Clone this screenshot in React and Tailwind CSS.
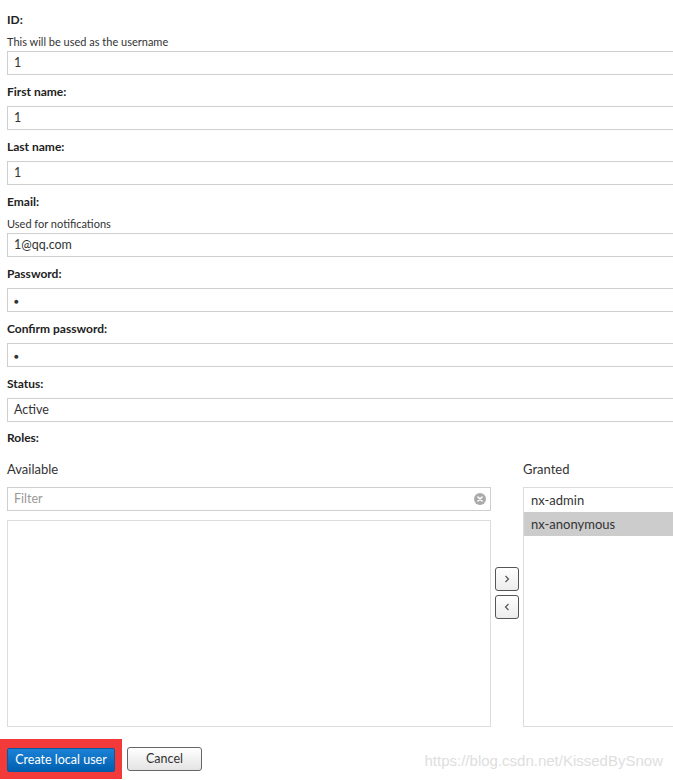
import React from 'react';

const Field = ({ label, help, value, first, dot }) => (
  <div className={first ? 'pt-[12px]' : 'pt-[9px]'}>
    <div className="h-4 leading-4 text-[12px] font-bold text-[#222]">{label}</div>
    {help && <div className="mt-[6px] h-4 leading-4 text-[11px] text-[#333]">{help}</div>}
    <div
      className={`${help ? 'mt-px' : 'mt-[6px]'} h-6 w-[700px] border border-[#cfcfcf] bg-white px-[6px] text-[12.5px] leading-[22px] text-[#333]`}
    >
      {dot ? <span className="text-[8px] align-middle">●</span> : value}
    </div>
  </div>
);

const App = () => {
  return (
    <div
      className="w-[673px] h-[780px] overflow-hidden bg-white pl-[7px]"
      style={{ fontFamily: 'Lato, "Open Sans", sans-serif' }}
    >
      <Field first label="ID:" help="This will be used as the username" value="1" />
      <Field label="First name:" value="1" />
      <Field label="Last name:" value="1" />
      <Field label="Email:" help="Used for notifications" value="1@qq.com" />
      <Field label="Password:" dot />
      <Field label="Confirm password:" dot />
      <Field label="Status:" value="Active" />

      <div className="pt-[8px] h-[24px] leading-4 text-[12px] font-bold text-[#222]">Roles:</div>

      <div className="mt-[15px] flex">
        {/* available */}
        <div className="w-[484px] shrink-0">
          <div className="h-4 leading-4 text-[13px] text-[#333]">Available</div>
          <div className="mt-[10px] relative h-6 border border-[#cfcfcf] px-[6px] text-[12.5px] leading-[22px] text-[#999]">
            Filter
            <span className="absolute right-[4px] top-[5px] flex h-3 w-3 items-center justify-center rounded-full bg-[#aaa]">
              <svg width="6" height="6" viewBox="0 0 6 6">
                <path d="M1 1L5 5M5 1L1 5" stroke="#fff" strokeWidth="1.6" strokeLinecap="round" />
              </svg>
            </span>
          </div>
          <div className="mt-[9px] h-[207px] border border-[#dcdcdc]"></div>
        </div>

        {/* move buttons */}
        <div className="mx-[4px] flex w-6 shrink-0 flex-col gap-[4px] pt-[106px]">
          <button className="flex h-6 w-6 items-center justify-center rounded-[3px] border border-[#555] bg-gradient-to-b from-white to-[#ececec]">
            <svg width="6" height="8" viewBox="0 0 6 8">
              <path d="M1.5 1L4.5 4L1.5 7" fill="none" stroke="#555" strokeWidth="1.2" />
            </svg>
          </button>
          <button className="flex h-6 w-6 items-center justify-center rounded-[3px] border border-[#555] bg-gradient-to-b from-white to-[#ececec]">
            <svg width="6" height="8" viewBox="0 0 6 8">
              <path d="M4.5 1L1.5 4L4.5 7" fill="none" stroke="#555" strokeWidth="1.2" />
            </svg>
          </button>
        </div>

        {/* granted */}
        <div className="w-[200px] shrink-0">
          <div className="h-4 leading-4 text-[13px] text-[#333]">Granted</div>
          <div className="mt-[10px] h-[240px] border border-[#dcdcdc] text-[13px] text-[#333]">
            <div className="h-6 px-[7px] leading-6">nx-admin</div>
            <div className="h-6 bg-[#cccccc] px-[7px] leading-6">nx-anonymous</div>
          </div>
        </div>
      </div>

      <div className="mt-[12px] -ml-[7px] flex items-center">
        <div className="bg-[#f23a3a] p-[7px]">
          <button className="h-6 w-[108px] rounded-[2px] border border-[#0b5aa0] bg-gradient-to-b from-[#1b82d6] to-[#0060b0] text-[12.5px] text-white">
            Create local user
          </button>
        </div>
        <button className="ml-[5px] h-6 w-[75px] rounded-[3px] border border-[#666] bg-gradient-to-b from-white to-[#e4e4e4] text-[12.5px] text-[#333]">
          Cancel
        </button>
        <div
          className="ml-auto mr-[10px] mt-[4px] text-[15px] text-[#dedede]"
          style={{ fontFamily: '"Liberation Sans", Arial, sans-serif' }}
        >
          https://blog.csdn.net/KissedBySnow
        </div>
      </div>
    </div>
  );
};

export default App;
